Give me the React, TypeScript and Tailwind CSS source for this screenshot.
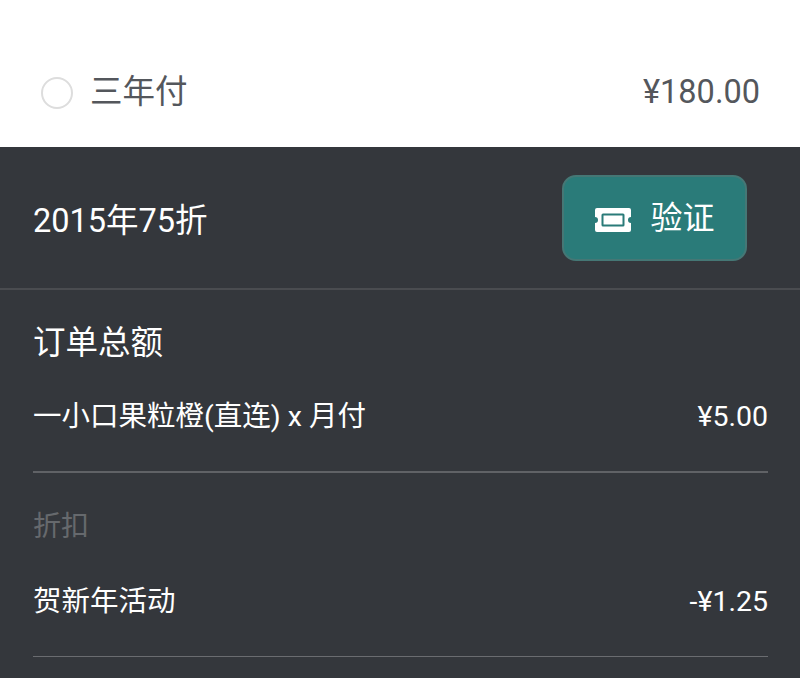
export default function App() {
  const font = { fontFamily: '"Roboto","Noto Sans CJK SC",sans-serif' };
  return (
    <div className="w-[800px] h-[678px] overflow-hidden bg-white" style={font}>
      <div className="h-[147px] pt-[71px] pl-[41px] pr-[40px] flex items-start justify-between">
        <div className="flex items-center gap-[17px] h-[42px]">
          <div className="w-[32px] h-[32px] rounded-full border-2 border-[#dddddd] mt-[2px]" />
          <span className="text-[32.5px] leading-[42px] text-[#54575c]">三年付</span>
        </div>
        <span className="text-[32.5px] leading-[42px] text-[#54575c]">¥180.00</span>
      </div>
      <div className="bg-[#34373c] h-[531px] text-white">
        <div className="h-[143px] pl-[33px] pr-[53px] flex items-center justify-between border-b-2 border-[#4a4c50]">
          <span className="text-[32.5px] leading-[42px] mt-[6px]">2015年75折</span>
          <div className="w-[185px] h-[86px] rounded-[14px] bg-[#2a7b79] border-2 border-[#457775] flex items-center justify-center gap-[18px]">
            <svg className="mt-[4px]" width="38" height="26" viewBox="0 0 38 26">
              <path fill="#fff" d="M3 1h32a2 2 0 0 1 2 2v7a3 3 0 0 0 0 6v7a2 2 0 0 1-2 2H3a2 2 0 0 1-2-2v-7a3 3 0 0 0 0-6V3a2 2 0 0 1 2-2z" />
              <rect x="8.5" y="7.5" width="21" height="11" fill="#fff" stroke="#2a7b79" strokeWidth="2" rx="0.5" />
            </svg>
            <span className="text-[32px] leading-[42px] mt-[1px]">验证</span>
          </div>
        </div>
        <div className="pl-[33px] pr-[32px]">
          <div className="pt-[32px] text-[32.5px] leading-[42px]">订单总额</div>
          <div className="mt-[34px] flex justify-between text-[28.5px] leading-[38px]">
            <span>一小口果粒橙(直连) x 月付</span>
            <span>¥5.00</span>
          </div>
          <div className="mt-[35px] border-b-2 border-[#606266]" />
          <div className="mt-[35px] text-[28px] leading-[38px] text-[#66696d]">折扣</div>
          <div className="mt-[37px] flex justify-between text-[28.5px] leading-[38px]">
            <span>贺新年活动</span>
            <span>-¥1.25</span>
          </div>
          <div className="mt-[35px] border-b border-[#6a6c70]" />
        </div>
      </div>
    </div>
  );
}
